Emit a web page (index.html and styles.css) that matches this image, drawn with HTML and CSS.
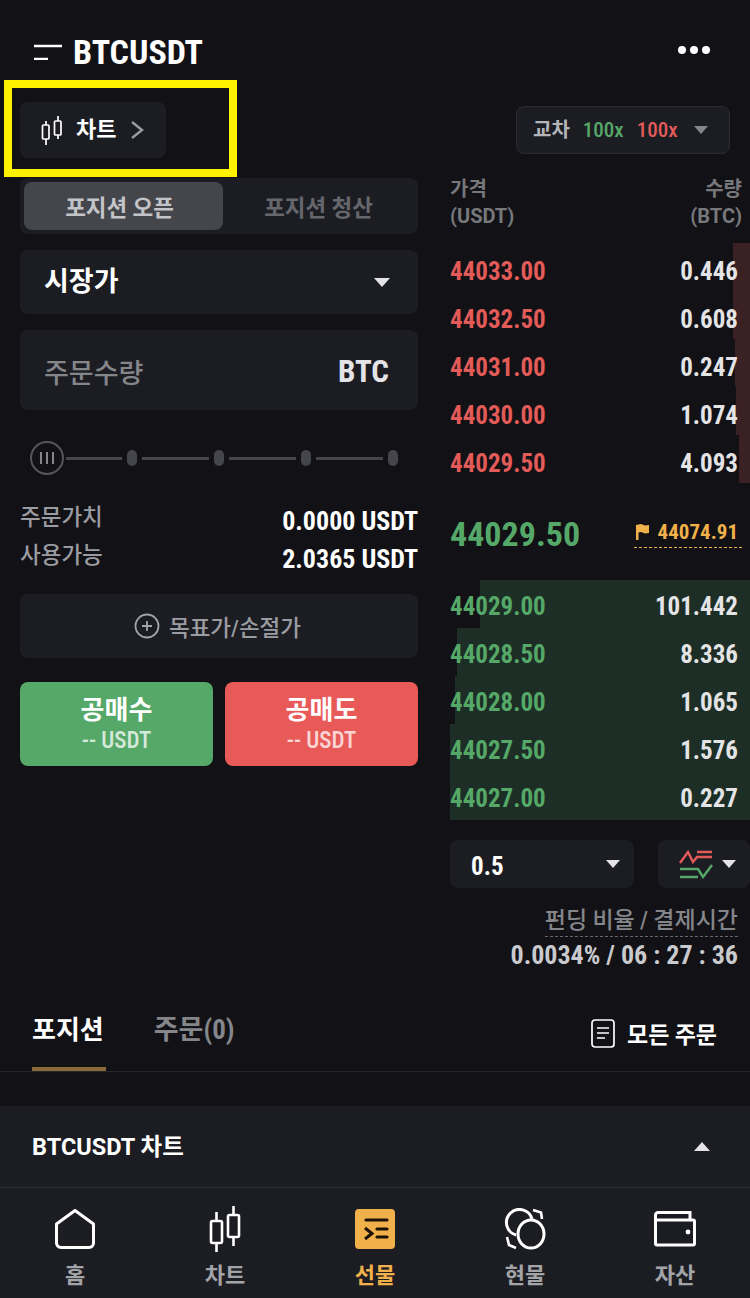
FILE: index.html
```html
<!DOCTYPE html>
<html lang="ko">
<head>
  <meta charset="UTF-8" />
  <meta name="viewport" content="width=device-width, initial-scale=1.0" />
  <title>BTCUSDT</title>
  <link rel="stylesheet" href="styles.css">
</head>
<body>
  <div class="app">
    <header class="topbar">
      <div class="title">
        <svg class="menu-icon" width="30" height="16" viewBox="0 0 30 16"><path d="M2 2H30M2 15H16" stroke="#fff" stroke-width="2.4" fill="none"/></svg>
        <h1>BTCUSDT</h1>
      </div>
      <div class="dots"><i></i><i></i><i></i></div>
    </header>

    <div class="toolbar">
      <div class="highlight">
        <button class="chart-btn">
          <svg width="24" height="30" viewBox="0 0 24 30" fill="none" stroke="#fff" stroke-width="1.7"><path d="M6 6V30M18 1V24"/><rect x="2.5" y="10" width="6.5" height="14" rx="1" fill="#1c1d23"/><rect x="14.5" y="6" width="6.5" height="14" rx="1" fill="#1c1d23"/></svg>
          <span>차트</span>
          <svg width="14" height="20" viewBox="0 0 14 20" fill="none" stroke="#9b9ca1" stroke-width="2.4"><path d="M2 2L12 10L2 18"/></svg>
        </button>
      </div>
      <div class="leverage">
        <span class="lev-label">교차</span>
        <span class="green">100x</span>
        <span class="red">100x</span>
        <b class="caret caret-dim"></b>
      </div>
    </div>

    <main class="trade">
      <section class="order">
        <div class="segment">
          <div class="seg seg-on">포지션 오픈</div>
          <div class="seg">포지션 청산</div>
        </div>
        <div class="field market">
          <span>시장가</span>
          <b class="caret"></b>
        </div>
        <div class="field qty">
          <span class="qty-label">주문수량</span>
          <span class="qty-unit">BTC</span>
        </div>
        <div class="slider">
          <div class="knob"><i></i><i></i><i></i></div>
          <div class="track track-first"></div><b class="stop"></b>
          <div class="track"></div><b class="stop"></b>
          <div class="track"></div><b class="stop"></b>
          <div class="track"></div><b class="stop"></b>
        </div>
        <div class="info-row"><span>주문가치</span><strong>0.0000 USDT</strong></div>
        <div class="info-row"><span>사용가능</span><strong>2.0365 USDT</strong></div>
        <div class="tpsl">
          <svg width="26" height="26" viewBox="0 0 26 26" fill="none" stroke="#a3a4a8" stroke-width="1.8"><circle cx="13" cy="13" r="11.5"/><path d="M8 13H18M13 8V18"/></svg>
          <span>목표가/손절가</span>
        </div>
        <div class="actions">
          <button class="action buy"><span>공매수</span><small>-- USDT</small></button>
          <button class="action sell"><span>공매도</span><small>-- USDT</small></button>
        </div>
      </section>

      <section class="book">
        <div class="book-head">
          <div>가격<br>(USDT)</div>
          <div class="right">수량<br>(BTC)</div>
        </div>
        <div class="rows">
          <div class="row"><div class="bar bar-ask" style="width:17px"></div><span class="red">44033.00</span><strong>0.446</strong></div>
          <div class="row"><div class="bar bar-ask" style="width:17px"></div><span class="red">44032.50</span><strong>0.608</strong></div>
          <div class="row"><div class="bar bar-ask" style="width:15px"></div><span class="red">44031.00</span><strong>0.247</strong></div>
          <div class="row"><div class="bar bar-ask" style="width:14px"></div><span class="red">44030.00</span><strong>1.074</strong></div>
          <div class="row"><div class="bar bar-ask" style="width:11px"></div><span class="red">44029.50</span><strong>4.093</strong></div>
        </div>
        <div class="mid">
          <span class="last">44029.50</span>
          <span class="mark">
            <svg width="13" height="16" viewBox="0 0 13 16" fill="#f0b04a"><path d="M0 1L5 0L9 1.5L13 1V9L9 9.5L5 8L2.5 8.5V16H0Z"/></svg>
            44074.91
          </span>
        </div>
        <div class="rows rows-bid">
          <div class="row"><div class="bar bar-bid" style="width:270px"></div><span class="green">44029.00</span><strong>101.442</strong></div>
          <div class="row"><div class="bar bar-bid" style="width:293px"></div><span class="green">44028.50</span><strong>8.336</strong></div>
          <div class="row"><div class="bar bar-bid" style="width:295px"></div><span class="green">44028.00</span><strong>1.065</strong></div>
          <div class="row"><div class="bar bar-bid" style="width:300px"></div><span class="green">44027.50</span><strong>1.576</strong></div>
          <div class="row"><div class="bar bar-bid" style="width:300px"></div><span class="green">44027.00</span><strong>0.227</strong></div>
        </div>
        <div class="book-tools">
          <div class="tick"><span>0.5</span><b class="caret caret-small"></b></div>
          <div class="view">
            <svg width="34" height="30" viewBox="0 0 34 30" fill="none" stroke-width="2.4"><path d="M1 14L9 3L14 13L18 8H33M18 3H33" stroke="#e25b58"/><path d="M1 20H19L24 28L33 16M1 28H19" stroke="#56a868"/></svg>
            <b class="caret caret-small"></b>
          </div>
        </div>
        <div class="funding">
          <div class="funding-label">펀딩 비율 / 결제시간</div>
          <div class="funding-value">0.0034% / 06 : 27 : 36</div>
        </div>
      </section>
    </main>

    <div class="tabs">
      <div class="tab tab-on">포지션</div>
      <div class="tab">주문(0)</div>
      <div class="all-orders">
        <svg width="24" height="29" viewBox="0 0 24 29" fill="none" stroke="#fff" stroke-width="1.7"><rect x="1" y="1" width="22" height="27" rx="3"/><path d="M6 9H18M6 14H18M6 19H14"/></svg>
        <span>모든 주문</span>
      </div>
    </div>

    <div class="chart-panel">
      <span>BTCUSDT 차트</span>
      <b class="caret-up"></b>
    </div>

    <nav class="nav">
      <a class="nav-item">
        <div class="nav-icon"><svg width="40" height="40" viewBox="0 0 40 40" fill="none" stroke="#fff" stroke-width="3" stroke-linejoin="round"><path d="M20 1.5L38.5 15V34A4.5 4.5 0 0 1 34 38.5H6A4.5 4.5 0 0 1 1.5 34V15Z"/></svg></div>
        <span>홈</span>
      </a>
      <a class="nav-item">
        <div class="nav-icon"><svg width="32" height="46" viewBox="0 0 32 46" fill="none" stroke="#fff" stroke-width="2.6"><path d="M7.5 6V46M24.5 0V40"/><rect x="2" y="15" width="11" height="22" rx="1.5" fill="#1c1d23"/><rect x="19" y="9" width="11" height="22" rx="1.5" fill="#1c1d23"/></svg></div>
        <span>차트</span>
      </a>
      <a class="nav-item nav-on">
        <div class="nav-icon"><svg width="40" height="40" viewBox="0 0 40 40"><rect width="40" height="40" rx="4" fill="#f0b04a"/><path d="M11 11H32M22 20H32M22 28H32" stroke="#1c1208" stroke-width="3.2" stroke-linecap="round"/><path d="M10 19L17 24.5L10 30" stroke="#1c1208" stroke-width="3" fill="none"/></svg></div>
        <span>선물</span>
      </a>
      <a class="nav-item">
        <div class="nav-icon"><svg width="42" height="42" viewBox="0 0 42 42" fill="none" stroke="#fff" stroke-width="3"><ellipse cx="27" cy="26" rx="13" ry="14"/><path d="M12 27A13 13 0 1 1 28 11"/><path d="M29 2L37 4.5L38 11M12 40L5 37L3 29" stroke-width="2.6"/></svg></div>
        <span>현물</span>
      </a>
      <a class="nav-item">
        <div class="nav-icon"><svg width="42" height="36" viewBox="0 0 42 36" fill="none" stroke="#fff" stroke-width="3"><path d="M1.5 10V4A2.5 2.5 0 0 1 4 1.5H36V10"/><rect x="1.5" y="9" width="39" height="25" rx="1.5"/><circle cx="34" cy="21" r="2.4" fill="#fff" stroke="none"/></svg></div>
        <span>자산</span>
      </a>
    </nav>
  </div>
</body>
</html>
```

FILE: styles.css
```css
* {
  box-sizing: border-box;
}
html, body {
  margin: 0;
  padding: 0;
}
body {
  background-color: #111116;
  color: #fff;
  font-family: Roboto, "Noto Sans CJK KR", sans-serif;
  font-stretch: 85%;
}
.app {
  width: 750px;
  height: 1298px;
  overflow: hidden;
  display: flex;
  flex-direction: column;
}
button {
  font-family: inherit;
  font-stretch: inherit;
  border: none;
  color: inherit;
}
.green { color: #56a868; }
.red { color: #e25b58; }

/* top */
.topbar {
  height: 80px;
  padding: 30px 40px 0 32px;
  display: flex;
  justify-content: space-between;
  align-items: flex-start;
}
.title {
  display: flex;
  align-items: center;
  gap: 11px;
}
h1 {
  margin: 0;
  font-size: 34px;
  line-height: 44px;
  font-weight: 700;
  font-stretch: 87%;
}
.dots {
  display: flex;
  gap: 4px;
  margin-top: 16px;
}
.dots i {
  width: 8px;
  height: 8px;
  border-radius: 50%;
  background: #fff;
}
.toolbar {
  height: 98px;
  padding: 0 20px 0 4px;
  display: flex;
  justify-content: space-between;
  align-items: flex-start;
}
.highlight {
  width: 233px;
  height: 97px;
  border: 8px solid #fff200;
  padding: 14px 8px;
}
.chart-btn {
  width: 146px;
  height: 56px;
  background: #1c1d23;
  border-radius: 8px;
  display: flex;
  align-items: center;
  padding: 0 0 0 20px;
  font-size: 22px;
  font-weight: 700;
}
.chart-btn span {
  margin: -7px 14px 0 12px;
}
.leverage {
  margin-top: 26px;
  width: 214px;
  height: 48px;
  background: #1c1d23;
  border: 1px solid #2a2b31;
  border-radius: 8px;
  padding: 0 16px;
  display: flex;
  align-items: center;
  gap: 13px;
  font-size: 21px;
  font-weight: 500;
  white-space: nowrap;
}
.lev-label {
  margin-top: -4px;
  font-size: 20px;
  color: #b4b5b9;
  font-weight: 700;
}
.caret {
  width: 0;
  height: 0;
  border-left: 8px solid transparent;
  border-right: 8px solid transparent;
  border-top: 9px solid #e4e4e6;
}
.caret-dim {
  border-top-color: #85868a;
  border-left-width: 7px;
  border-right-width: 7px;
  border-top-width: 8px;
  margin-left: 3px;
}
.caret-small {
  border-left-width: 7px;
  border-right-width: 7px;
  border-top-width: 8px;
}

/* main columns */
.trade {
  display: flex;
  padding-left: 20px;
  height: 795px;
}
.order {
  width: 398px;
  margin-right: 32px;
}
.segment {
  height: 56px;
  background: #1c1d23;
  border-radius: 8px;
  padding: 4px;
  display: flex;
}
.seg {
  flex: 1;
  display: flex;
  align-items: center;
  justify-content: center;
  border-radius: 8px;
  font-size: 22.5px;
  font-weight: 700;
  color: #66676c;
}
.seg-on {
  flex: none;
  width: 199px;
  padding-right: 8px;
  background: #45464c;
  color: #c3c4c7;
}
.field {
  background: #1c1d23;
  border-radius: 8px;
  display: flex;
  justify-content: space-between;
  align-items: center;
  padding: 0 28px 0 24px;
}
.market {
  height: 64px;
  margin-top: 16px;
  font-size: 27px;
  font-weight: 700;
}
.market span {
  margin-top: -6px;
}
.qty {
  height: 80px;
  margin-top: 16px;
  padding-right: 29px;
}
.qty-label {
  margin-top: 2px;
  font-size: 27px;
  font-weight: 500;
  color: #85868a;
}
.qty-unit {
  margin-top: 3px;
  font-size: 31px;
  font-weight: 700;
  color: #e4e4e6;
}
.slider {
  display: flex;
  align-items: center;
  gap: 5px;
  margin: 31px 0 0 10px;
  height: 34px;
}
.knob {
  width: 34px;
  height: 34px;
  margin-right: -3px;
  border: 2px solid #55565b;
  border-radius: 50%;
  display: flex;
  align-items: center;
  justify-content: center;
  gap: 4px;
  flex: none;
}
.knob i {
  width: 2px;
  height: 12px;
  background: #85868a;
}
.track {
  flex: none;
  width: 67px;
  height: 3px;
  background: #45464c;
}
.track-first {
  width: 56px;
}
.stop {
  width: 10px;
  height: 16px;
  border-radius: 5px;
  background: #45464c;
  flex: none;
}
.info-row {
  display: flex;
  justify-content: space-between;
  align-items: center;
  height: 38px;
  font-size: 22.5px;
  font-weight: 500;
  color: #9b9ca1;
}
.slider + .info-row {
  margin-top: 27px;
}
.info-row strong {
  font-size: 26px;
  font-weight: 700;
  color: #fff;
}
.info-row span {
  margin-top: -13px;
}
.tpsl {
  height: 64px;
  margin-top: 16px;
  background: #1c1d23;
  border-radius: 8px;
  display: flex;
  align-items: center;
  justify-content: center;
  gap: 9px;
  padding-right: 3px;
  font-size: 22.5px;
  font-weight: 500;
  color: #9b9ca1;
}
.actions {
  display: flex;
  gap: 12px;
  margin-top: 24px;
}
.action {
  flex: 1;
  height: 84px;
  border-radius: 8px;
  display: flex;
  flex-direction: column;
  align-items: center;
  justify-content: center;
  padding: 0;
}
.action span {
  font-size: 26px;
  line-height: 34px;
  font-weight: 700;
}
.action small {
  font-size: 23px;
  line-height: 28px;
  font-weight: 500;
  opacity: 0.75;
}
.buy { background: #56a868; }
.sell { background: #e85a58; }

/* order book */
.book {
  width: 300px;
}
.book-head {
  height: 69px;
  margin-top: -2px;
  margin-bottom: 2px;
  display: flex;
  justify-content: space-between;
  font-size: 20px;
  font-stretch: 90%;
  line-height: 27px;
  font-weight: 700;
  color: #77787c;
  padding: 0 8px 0 0;
}
.right {
  text-align: right;
}
.row {
  position: relative;
  height: 48px;
  display: flex;
  justify-content: space-between;
  align-items: center;
  padding-right: 12px;
  font-size: 25px;
}
.row span, .row strong {
  position: relative;
  font-weight: 700;
}
.rows-bid .row {
  padding-top: 5px;
}
.row strong {
  color: #e4e4e6;
}
.bar {
  position: absolute;
  top: 0;
  right: 0;
  bottom: 0;
}
.bar-ask {
  top: -4px;
  bottom: 4px;
  background: #3a2224;
}
.bar-bid { background: #1c2e25; }
.mid {
  height: 93px;
  display: flex;
  justify-content: space-between;
  align-items: center;
  padding-right: 8px;
}
.last {
  font-size: 34px;
  font-weight: 700;
  color: #56a868;
}
.mark {
  display: flex;
  align-items: center;
  gap: 9px;
  padding: 0 4px 3px 2px;
  border-bottom: 1px dashed #f0b04a;
  color: #f0b04a;
  font-size: 21px;
  font-weight: 700;
}
.book-tools {
  display: flex;
  gap: 24px;
  margin-top: 20px;
}
.tick, .view {
  height: 48px;
  background: #1c1d23;
  border-radius: 8px;
  display: flex;
  align-items: center;
  justify-content: space-between;
}
.tick {
  width: 184px;
  padding: 0 14px 0 21px;
  font-size: 25px;
  font-weight: 700;
}
.tick span {
  margin-top: 4px;
}
.view {
  width: 92px;
  padding: 0 14px 0 21px;
}
.funding {
  margin-top: 18px;
  padding-right: 12px;
  text-align: right;
}
.funding-label {
  display: inline-block;
  font-size: 23px;
  line-height: 30px;
  font-weight: 500;
  color: #85868a;
  border-bottom: 1px dashed #66676c;
  margin-bottom: 1px;
}
.funding-value {
  font-size: 26px;
  line-height: 34px;
  font-weight: 700;
  color: #c9cacd;
}

/* tabs */
.tabs {
  height: 100px;
  margin-top: -1px;
  padding: 0 32px;
  border-bottom: 1px solid #26272c;
  display: flex;
  align-items: flex-start;
}
.tab {
  height: 99px;
  margin-right: 48px;
  padding-top: 40px;
  font-size: 27px;
  line-height: 36px;
  font-weight: 700;
  color: #85868a;
}
.tab-on {
  padding-right: 2px;
  font-size: 26px;
  color: #fff;
  border-bottom: 4px solid #8a6a38;
}
.all-orders {
  margin-left: auto;
  margin-top: 44px;
  padding-right: 1px;
  display: flex;
  align-items: center;
  gap: 12px;
  font-size: 23px;
  font-weight: 700;
}
.chart-panel {
  margin-top: 34px;
  height: 81px;
  background: #1c1d23;
  padding: 0 40px 0 32px;
  display: flex;
  justify-content: space-between;
  align-items: center;
  font-size: 23.5px;
  font-stretch: 100%;
  font-weight: 700;
}
.chart-panel span {
  margin-top: -4px;
}
.caret-up {
  width: 0;
  height: 0;
  border-left: 8px solid transparent;
  border-right: 8px solid transparent;
  border-bottom: 9px solid #e4e4e6;
}

/* bottom nav */
.nav {
  flex: 1;
  border-top: 1px solid #303136;
  background: #1c1d23;
  display: flex;
}
.nav-item {
  flex: 1;
  padding-top: 17px;
  display: flex;
  flex-direction: column;
  align-items: center;
  font-size: 22px;
  line-height: 32px;
  font-weight: 700;
  color: #a3a4a8;
}
.nav-icon {
  height: 48px;
  margin-bottom: 7px;
  display: flex;
  align-items: center;
}
.nav-on {
  color: #f0b04a;
}
```
